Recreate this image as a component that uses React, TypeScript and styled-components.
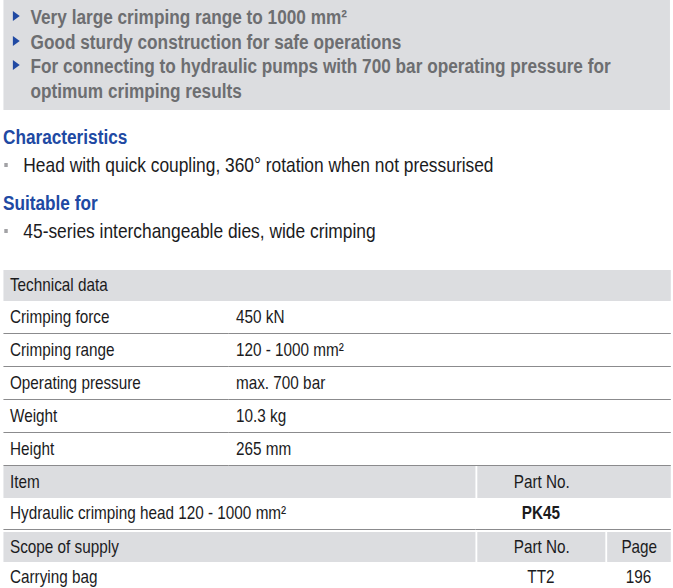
import React from "react";
import styled, { createGlobalStyle } from "styled-components";

// The catalogue face is a condensed grotesque; we get it by squeezing the
// whole sheet horizontally, so every width below is in "unsqueezed" pixels.
const SQUEEZE = 0.86;
const VIEW_WIDTH = 673;

const FONT = `"Liberation Sans", Arial, sans-serif`;
const BLUE = "#2049a3";
const GREY_BG = "#dcdde0";
const TEXT = "#1b1b1d";
const RULE = "#8b8b8d";

const COLS = [262.8, 287.2, 151, 75.7];

const GlobalStyle = createGlobalStyle`
  body {
    margin: 0;
    background: #fff;
    overflow: hidden;
    font-family: ${FONT};
  }
`;

const Page = styled.div`
  width: ${VIEW_WIDTH / SQUEEZE}px;
  padding: 0 0 0 3.5px;
  box-sizing: border-box;
  transform: scaleX(${SQUEEZE});
  transform-origin: 0 0;
`;

// --------------------------------------------------------------------------------
// Highlights box
const Highlights = styled.ul`
  margin: 0;
  padding: 5px 10px 7px 11px;
  list-style: none;
  background: ${GREY_BG};
  width: 775.6px;
  box-sizing: border-box;
`;

const HighlightItem = styled.li`
  display: flex;
  align-items: flex-start;
  font-size: 20px;
  line-height: 24.5px;
  font-weight: bold;
  color: #6d6e71;
`;

const Arrow = styled.span`
  flex: none;
  width: 0;
  height: 0;
  margin: 6px 13px 0 0;
  border-top: 5.5px solid transparent;
  border-bottom: 5.5px solid transparent;
  border-left: 8px solid ${BLUE};
`;

// --------------------------------------------------------------------------------
// Sections
const Section = styled.section<{ $top: number }>`
  margin-top: ${(p) => p.$top}px;
`;

const Heading = styled.h3`
  margin: 0;
  font-size: 20px;
  line-height: 26px;
  font-weight: bold;
  color: ${BLUE};
`;

const Bullet = styled.div`
  display: flex;
  align-items: center;
  font-size: 20.2px;
  line-height: 30px;
  color: ${TEXT};

  &::before {
    content: "";
    flex: none;
    width: 4.65px;
    height: 4px;
    margin: 0 17.8px 0 1.2px;
    background: #a2a2a5;
  }
`;

// --------------------------------------------------------------------------------
// Table
const Table = styled.table`
  margin-top: 24px;
  width: 776.7px;
  table-layout: fixed;
  border-collapse: separate;
  border-spacing: 0;
  font-size: 17.8px;
  color: ${TEXT};
`;

const Col = styled.col<{ $w: number }>`
  width: ${(p) => p.$w}px;
`;

const Row = styled.tr<{ $h: number; $head?: boolean; $line?: boolean }>`
  height: ${(p) => p.$h}px;
  background: ${(p) => (p.$head ? GREY_BG : "transparent")};

  & > td {
    border-bottom: ${(p) => (p.$line ? `1px solid ${RULE}` : "none")};
  }
`;

const Gap = styled.tr`
  height: 2px;
`;

const Cell = styled.td<{ $center?: boolean; $sep?: boolean; $bold?: boolean }>`
  padding: 0 8.1px;
  text-align: ${(p) => (p.$center ? "center" : "left")};
  font-weight: ${(p) => (p.$bold ? "bold" : "normal")};
  border-left: ${(p) => (p.$sep ? "2.3px solid #fff" : "none")};
  white-space: nowrap;
`;

// Part No. sits centred over the third column while the cell also covers the
// empty fourth one, so the grey band has no seam.
const PartCell = styled(Cell)`
  padding-right: ${COLS[3] + 8.1}px;
`;

const highlights = [
  "Very large crimping range to 1000 mm²",
  "Good sturdy construction for safe operations",
  "For connecting to hydraulic pumps with 700 bar operating pressure for optimum crimping results",
];

const techData = [
  ["Crimping force", "450 kN"],
  ["Crimping range", "120 - 1000 mm²"],
  ["Operating pressure", "max. 700 bar"],
  ["Weight", "10.3 kg"],
  ["Height", "265 mm"],
];

export default function App() {
  return (
    <Page>
      <GlobalStyle />
      <Highlights>
        {highlights.map((h) => (
          <HighlightItem key={h}>
            <Arrow />
            <span>{h}</span>
          </HighlightItem>
        ))}
      </Highlights>

      <Section $top={14}>
        <Heading>Characteristics</Heading>
        <Bullet>Head with quick coupling, 360° rotation when not pressurised</Bullet>
      </Section>
      <Section $top={10}>
        <Heading>Suitable for</Heading>
        <Bullet>45-series interchangeable dies, wide crimping</Bullet>
      </Section>

      <Table>
        <colgroup>
          {COLS.map((w, i) => (
            <Col key={i} $w={w} />
          ))}
        </colgroup>
        <tbody>
          <Row $h={31} $head>
            <Cell colSpan={4}>Technical data</Cell>
          </Row>
          {techData.map(([k, v]) => (
            <Row key={k} $h={33} $line>
              <Cell>{k}</Cell>
              <Cell colSpan={3}>{v}</Cell>
            </Row>
          ))}
          <Row $h={32} $head>
            <Cell colSpan={2}>Item</Cell>
            <PartCell $sep $center colSpan={2}>
              Part No.
            </PartCell>
          </Row>
          <Row $h={32} $line>
            <Cell colSpan={2}>Hydraulic crimping head 120 - 1000 mm²</Cell>
            <PartCell $bold $center colSpan={2}>
              PK45
            </PartCell>
          </Row>
          <Gap />
          <Row $h={30} $head>
            <Cell colSpan={2}>Scope of supply</Cell>
            <Cell $sep $center>
              Part No.
            </Cell>
            <Cell $sep $center>
              Page
            </Cell>
          </Row>
          <Row $h={30}>
            <Cell colSpan={2}>Carrying bag</Cell>
            <Cell $center>TT2</Cell>
            <Cell $center>196</Cell>
          </Row>
        </tbody>
      </Table>
    </Page>
  );
}
